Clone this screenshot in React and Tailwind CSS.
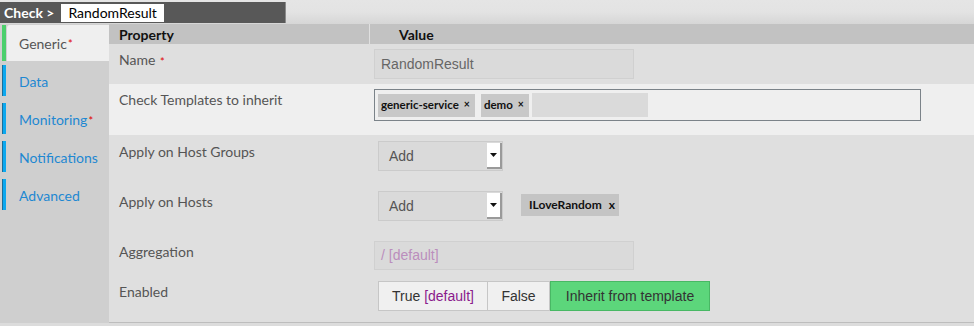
import React from 'react';

const lato = { fontFamily: 'Lato, "Open Sans", sans-serif' };

const Star = () => <sup className="text-[#e00000] text-[11px] ml-[1px] relative top-[1px]">*</sup>;

const tabs = [
  { name: 'Generic', active: true, star: true },
  { name: 'Data' },
  { name: 'Monitoring', star: true },
  { name: 'Notifications' },
  { name: 'Advanced' },
];

const Sidebar = () => (
  <div className="w-[109px] shrink-0 bg-[#cfcfcf] pt-[1px] flex flex-col">
    {tabs.map((t) =>
      t.active ? (
        <div key={t.name} className="flex h-[36px] mb-[4px]">
          <div className="w-[4px] ml-[2px] bg-[#4ccf6c]" />
          <div className="flex-1 ml-[1px] bg-[#efefef] rounded-tl-[3px] flex items-center pl-[12px] text-[14px] text-[#555]" style={lato}>
            {t.name}
            {t.star && <Star />}
          </div>
        </div>
      ) : (
        <div key={t.name} className="flex h-[31px] mb-[7px]">
          <div className="w-[4px] ml-[2px] bg-[#0ca8ef] border-l border-[#1a6f9a]" />
          <div className="flex-1 flex items-center pl-[13px] pt-[2px] text-[14px] text-[#1e88d2]" style={lato}>
            {t.name}
            {t.star && <Star />}
          </div>
        </div>
      )
    )}
  </div>
);

const Label = ({ children, pt = 'pt-[5px]' }) => (
  <div className={`w-[261px] shrink-0 pl-[10px] ${pt} text-[14px] text-[#555]`} style={lato}>
    {children}
  </div>
);

const Token = ({ children }) => (
  <span className="inline-flex items-center h-[23px] pl-[3px] pr-[5px] bg-[#c8c8c8] text-[11.5px] font-bold text-[#111] gap-[5px]" style={lato}>
    {children}
    <span className="text-[10.5px]">×</span>
  </span>
);

const Select = () => (
  <div className="flex w-[125px] h-[30px] bg-[#dadada] border border-[#cbcbcb] font-['Liberation_Sans'] text-[14px] text-[#555]">
    <div className="flex-1 flex items-center pl-[10px]">Add</div>
    <div className="w-[15px] my-[1px] bg-white border-r-2 border-b-2 border-[#9a9a9a] flex items-center justify-center">
      <svg width="7" height="4" viewBox="0 0 7 4">
        <path d="M0 0h7L3.5 4z" fill="#111" />
      </svg>
    </div>
  </div>
);

export default function App() {
  return (
    <div className="w-[974px] h-[326px] overflow-hidden bg-[#e2e2e2] flex flex-col">
      {/* breadcrumb strip */}
      <div className="h-[24px] shrink-0 bg-gradient-to-b from-[#e5e5e5] via-[#e3e3e3] to-[#d6d6d6] pt-[2px]">
        <div className="w-[286px] h-[21px] bg-[#585858] border-r border-[#8a8a8a] flex items-center pl-[4px]">
          <span className="text-white font-bold text-[14px] mr-[7px]" style={lato}>Check &gt;</span>
          <span className="bg-white h-[18px] px-[7px] flex items-center text-[14px] text-black" style={lato}>RandomResult</span>
        </div>
      </div>

      <div className="flex h-[299px] shrink-0">
        <Sidebar />
        <div className="flex-1 flex flex-col bg-[#dfdfdf]">
          {/* header */}
          <div className="flex h-[20px] bg-[#c2c2c2] text-[14px] font-bold text-[#111]" style={lato}>
            <div className="w-[261px] pl-[10px] flex items-center border-r border-[#e0e0e0]">Property</div>
            <div className="pl-[29px] flex items-center">Value</div>
          </div>

          {/* Name */}
          <div className="flex h-[40px]">
            <Label>Name <Star /></Label>
            <div className="pl-[4px] pt-[5px]">
              <div className="w-[260px] h-[30px] bg-[#dadada] border border-[#d0d0d0] flex items-center pl-[6px] font-['Liberation_Sans'] text-[14px] text-[#666]">
                RandomResult
              </div>
            </div>
          </div>

          {/* Templates */}
          <div className="flex h-[51px] bg-[#efefef]">
            <Label>Check Templates to inherit</Label>
            <div className="pl-[4px] pt-[5px]">
              <div className="w-[547px] h-[32px] border border-[#7b8389] flex items-center gap-[6px] pl-[3px]">
                <Token>generic-service</Token>
                <Token>demo</Token>
                <div className="w-[116px] h-[24px] -ml-[3px] bg-[#dadada]" />
              </div>
            </div>
          </div>

          {/* Host groups */}
          <div className="flex h-[50px]">
            <Label pt="pt-[6px]">Apply on Host Groups</Label>
            <div className="pl-[8px] pt-[6px]">
              <Select />
            </div>
          </div>

          {/* Hosts */}
          <div className="flex h-[50px]">
            <Label pt="pt-[6px]">Apply on Hosts</Label>
            <div className="pl-[8px] pt-[6px] flex items-start gap-[18px]">
              <Select />
              <span className="mt-[3px] inline-flex items-center h-[22px] w-[98px] pl-[8px] bg-[#c4c4c4] text-[12px] font-bold text-[#111]" style={lato}>
                ILoveRandom
                <span className="ml-auto mr-[4px] text-[12px]">x</span>
              </span>
            </div>
          </div>

          {/* Aggregation */}
          <div className="flex h-[40px]">
            <Label pt="pt-[6px]">Aggregation</Label>
            <div className="pl-[4px] pt-[6px]">
              <div className="w-[260px] h-[29px] bg-[#dadada] border border-[#d0d0d0] flex items-center pl-[6px] font-['Liberation_Sans'] text-[14px] text-[#bb8ebd]">
                / [default]
              </div>
            </div>
          </div>

          {/* Enabled */}
          <div className="flex flex-1 border-b border-[#bdbdbd]">
            <Label pt="pt-[6px]">Enabled</Label>
            <div className="pl-[8px] pt-[6px]">
              <div className="flex h-[30px] font-['Liberation_Sans'] text-[14px] text-[#333]">
                <div className="w-[110px] bg-[#f0f0f0] border border-[#c6c6c6] flex items-center justify-center">
                  True&nbsp;<span className="text-[#8a1a8c]">[default]</span>
                </div>
                <div className="w-[62px] bg-[#f0f0f0] border-y border-r border-[#c6c6c6] flex items-center justify-center">
                  False
                </div>
                <div className="w-[160px] bg-[#5cd67b] border border-[#48b864] flex items-center justify-center">
                  Inherit from template
                </div>
              </div>
            </div>
          </div>
        </div>
      </div>
      <div className="flex-1 bg-[#dcdcdc]" />
    </div>
  );
}
